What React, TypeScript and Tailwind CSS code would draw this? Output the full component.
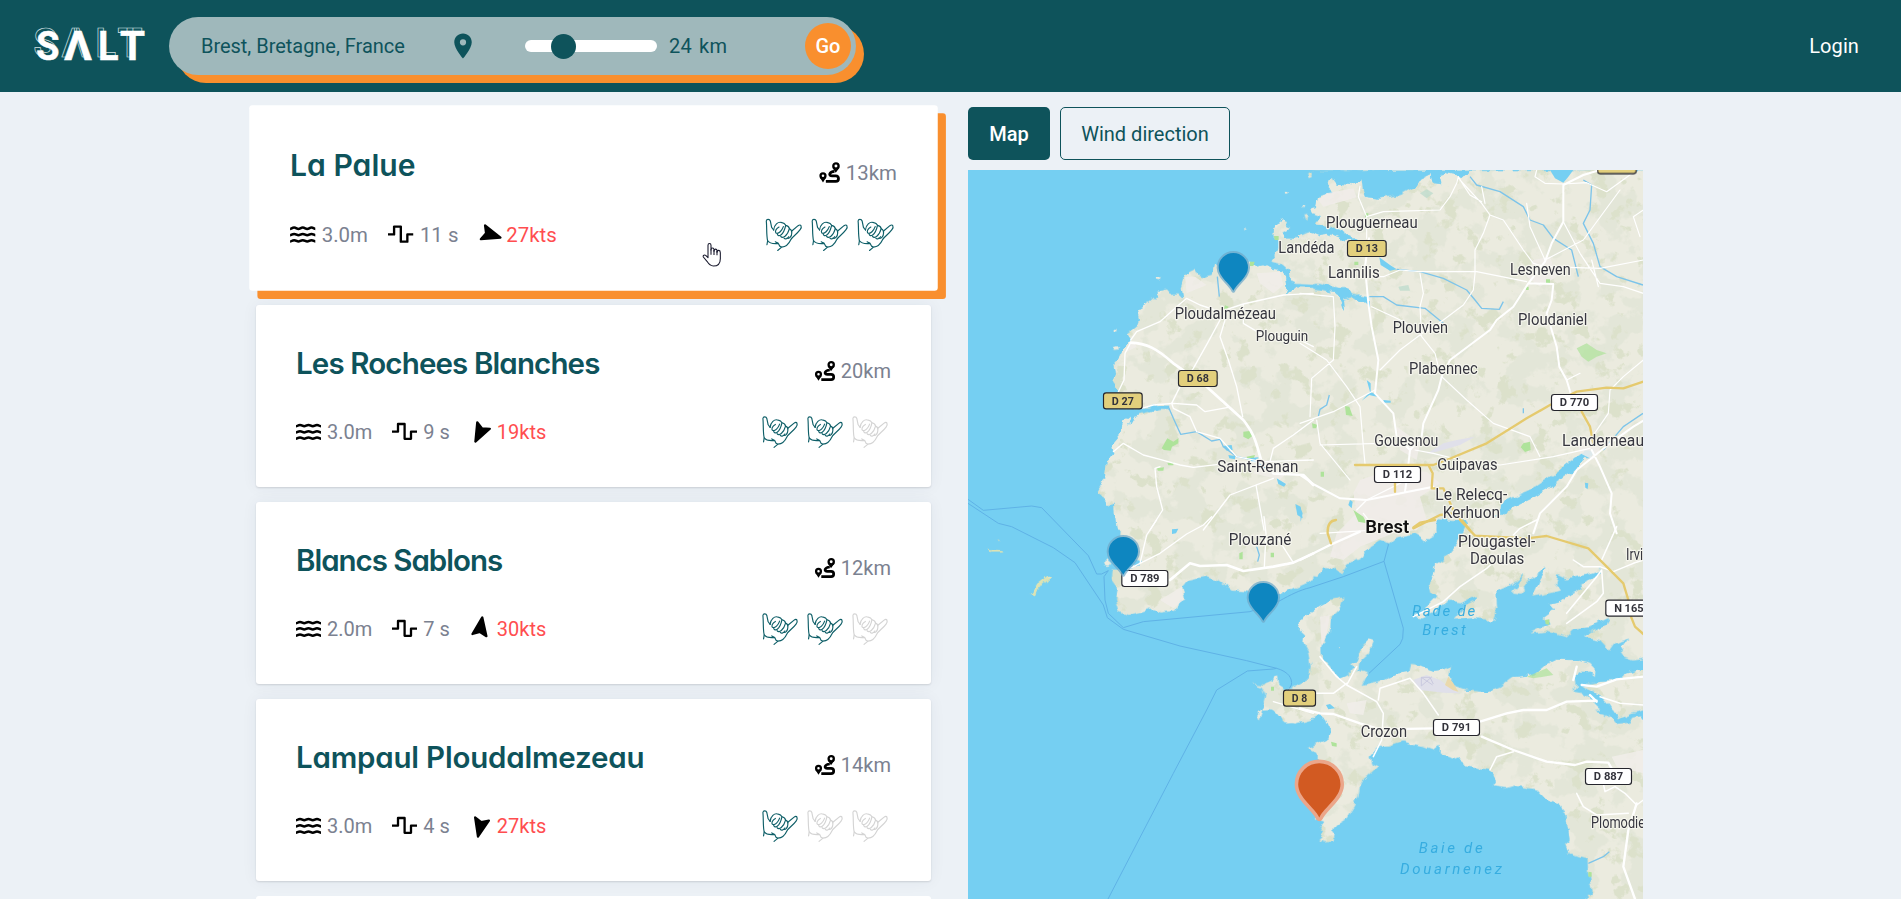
import React from "react";

type Beach = { name: string; tracking: string; km: number; wave: string; period: string; wind: string; heading: number; rating: number; active?: boolean };

const beaches: Beach[] = [
  { name: "La Palue", tracking: "tracking-[0px]", km: 13, wave: "3.0m", period: "11 s", wind: "27kts", heading: 107, rating: 3, active: true },
  { name: "Les Rochees Blanches", tracking: "tracking-[-0.87px]", km: 20, wave: "3.0m", period: "9 s", wind: "19kts", heading: 207, rating: 2 },
  { name: "Blancs Sablons", tracking: "tracking-[-1.02px]", km: 12, wave: "2.0m", period: "7 s", wind: "30kts", heading: 9, rating: 2 },
  { name: "Lampaul Ploudalmezeau", tracking: "tracking-[-0.2px]", km: 14, wave: "3.0m", period: "4 s", wind: "27kts", heading: 193, rating: 1 },
];

/* ---------- icons ---------- */

function Logo() {
  const letters: [string, number, number][] = [["S", 36, 23.5], ["Λ", 64, 28], ["L", 98, 20.5], ["T", 120, 25]];
  return (
    <svg className="h-[92px] w-[169px] shrink-0" viewBox="0 0 169 92" fontFamily="Roboto, sans-serif" fontWeight="700" fontSize="40.5">
      {letters.map(([l, x, w]) => (
        <text key={"o" + l} x={x - 2.5} y="57" textLength={w} lengthAdjust="spacingAndGlyphs" fill="none" stroke="#d5e2e3" strokeWidth="0.7">{l}</text>
      ))}
      {letters.map(([l, x, w]) => (
        <text key={l} x={x} y="59.7" textLength={w} lengthAdjust="spacingAndGlyphs" fill="#fff" stroke="#fff" strokeWidth="0.5">{l}</text>
      ))}
    </svg>
  );
}

function PlaceIcon() {
  return (
    <svg className="size-[30px] fill-[#0e535b]" viewBox="0 0 24 24">
      <path d="M12 2C8.13 2 5 5.13 5 9c0 5.25 7 13 7 13s7-7.75 7-13c0-3.87-3.13-7-7-7zm0 9.5a2.5 2.5 0 1 1 0-5 2.5 2.5 0 0 1 0 5z" />
    </svg>
  );
}

function WavesIcon() {
  const wave = "c1.3 0 2-1.3 4-1.3s2.6 1.3 4.2 1.3s2.3-1.3 4.3-1.3s2.6 1.3 4.3 1.3s2.3-1.3 4.2-1.3s2.7 1.3 4 1.3";
  return (
    <svg className="h-[19px] w-[25px]" viewBox="0 0 25 19" fill="none" stroke="#000" strokeWidth="2.5">
      <path d={`M0 4.3${wave}`} />
      <path d={`M0 10.5${wave}`} />
      <path d={`M0 16.7${wave}`} />
    </svg>
  );
}

function PeriodIcon() {
  return (
    <svg className="h-[19px] w-[25px]" viewBox="0 0 25 19" fill="none" stroke="#000" strokeWidth="2.3" strokeLinejoin="round">
      <path d="M0 9.7H6V2H12.600V16.800H19V9.700H25" />
    </svg>
  );
}

function WindIcon({ heading }: { heading: number }) {
  return (
    <svg className="mr-[2px] -ml-[2px] size-[25px] overflow-visible" viewBox="0 0 25 25" style={{ transform: `rotate(${heading}deg)` }}>
      <path d="M12.5 1.2L19.6 19.2L12.5 16L5.4 19.2Z" stroke="#000" strokeWidth="2.2" strokeLinejoin="round" />
    </svg>
  );
}

function RouteIcon() {
  return (
    <svg className="size-5 overflow-visible" viewBox="0 0 20 20" fill="none" stroke="#000">
      <circle cx="16.2" cy="3.7" r="2.6" strokeWidth="2.3" />
      <path d="M12.900 5.500L16 10.200L19.400 5.500L16.200 7Z" fill="#000" stroke="none" />
      <circle cx="3.500" cy="13.200" r="2.400" strokeWidth="2.300" />
      <path d="M.5 15L3.500 19.800L6.500 15L3.500 16.200Z" fill="#000" stroke="none" />
      <path d="M14.800 9C9.500 9.500 8.500 13.200 12.500 13.400H16C19.600 13.600 19.600 18.500 16 18.700H6.300" strokeWidth="2.700" />
    </svg>
  );
}

function ShakaIcon({ on }: { on: boolean }) {
  return (
    <svg className="size-[45px]" viewBox="14 16 137 137" fill="none" stroke={on ? "#0f5f68" : "#d4d4d4"} strokeWidth="3.5" strokeLinejoin="round" strokeLinecap="round">
      <path d="M37 116L39 104C35 90 37 60 35 45C36 38 45 39 47 45L51 64L57 72" />
      <path d="M39 104C45 113 60 113 71 112M62 107L71 112L75 120L81 123L69 133M81 123C95 122 103 112 108 101C112 92 125 86 136 71C143 61 138 53 130 59L112 74" />
      <path d="M57 72C58 57 70 45 82 50C88 51 91 54 93 58C99 59 103 63 104 68C109 70 112 74 111 81C111 91 104 99 97 96" />
      <path d="M73 63C64 68 60 76 64 81C72 85 82 73 86 62" />
      <path d="M68 84C70 94 86 90 93 58" />
      <path d="M78 91C84 99 98 90 104 68" />
      <path d="M88 96C92 101 98 98 102 92" />
    </svg>
  );
}

function HandCursor() {
  return (
    <svg className="h-[26px] w-[20px]" viewBox="187 442 60 78" fill="#fff" stroke="#17182c" strokeWidth="3.2" strokeLinejoin="round">
      <path d="M205 489V452C205 445 214 445 214 452V466C214 458 223 459 223 465V470C223 461 232 462 232 468V473C233 464 242 466 242 474V492C242 506 235 514 221 514C211 514 207 508 202 500L191 487C189 481 195 480 198 482Z" />
      <path d="M214 464V480M223 466V481M232 469V482" fill="none" />
    </svg>
  );
}

/* ---------- cards ---------- */

function BeachCard({ b }: { b: Beach }) {
  return (
    <article
      className={
        "h-[182px] w-[675px] shrink-0 rounded-[3px] bg-white px-10 pt-[35px] " +
        (b.active
          ? "z-10 -translate-y-px scale-[1.02] shadow-[8px_8px_0_#f98f2e]"
          : "shadow-[0_1px_2px_rgba(0,0,0,0.12),0_0_16px_rgba(40,50,80,0.06)]")
      }
    >
      <div className="flex h-[46px] items-start justify-between">
        <h2 className={"font-[Inter] text-[29.5px] leading-[46px] font-semibold text-[#0e535b] [font-feature-settings:'cv11'] " + b.tracking}>{b.name}</h2>
        <div className="flex items-center gap-[6px] pt-[16px] text-[20px] leading-[30px] text-[#7b8190]">
          <RouteIcon />
          <span>{b.km}km</span>
        </div>
      </div>
      <div className="mt-[18px] flex h-[55px] items-center justify-between">
        <div className="flex items-center text-[20px] leading-[30px] text-[#7b8190]">
          <WavesIcon />
          <span className="ml-[6px]">{b.wave}</span>
          <span className="ml-[20px] flex items-center gap-[6px]"><PeriodIcon />{b.period}</span>
          <span className="ml-[20px] flex items-center gap-[2px] text-[#ff4d4f]"><WindIcon heading={b.heading} />{b.wind}</span>
        </div>
        <div className="-mt-px flex">
          {[1, 2, 3].map((n) => <ShakaIcon key={n} on={n <= b.rating} />)}
        </div>
      </div>
    </article>
  );
}

/* ---------- map (drawn in units of one third of a pixel) ---------- */

const landNW = "M1060 215L1025 232L1000 235L972 236L975 215L995 203L982 198L972 182L965 176L958 188L945 195L940 228L955 245L962 262L945 285L930 305L965 312L985 330L990 365L1010 372L1060 374V384L1010 382L985 400L975 405L980 385L975 350L968 330L930 325L910 315L885 320L865 305L800 320L765 314L758 345L735 350L715 345L710 330L685 342L668 340L672 360L665 385L670 415L655 400L630 402L618 388L600 392L580 415L560 432L530 450L537 480L530 498L500 520L512 540L490 570L480 590L460 612L465 640L456 670L475 695L470 740L500 752L545 745L600 738L628 738L625 750L600 750L560 758L525 766L505 800L512 768L490 785L480 820L455 850L460 880L440 910L435 950L408 1000L440 1020L442 1040L462 1035L468 1110H1060Z";
const landNE = "M20 30H1050V1120H520L590 1080L640 1042L700 1012L760 977L820 932L872 885L878 868L858 872L820 900L770 938L700 985L620 1022L600 1035L595 1070L515 1078L460 1080L410 1078V1120H0V384L60 388L110 400L125 425L135 450L132 415L155 408L195 430L210 445L208 410L160 400L140 385L115 385L60 372L0 370V228L30 215L55 225L85 220L130 240L175 238L130 220L90 200L45 190L60 170L35 160L30 145L45 140L50 110L100 98L85 85L95 52L110 70L160 75L185 62L188 90L195 110L235 115L300 105L345 80L360 55L395 38L400 72L424 75L418 45L440 38L490 48L510 40V20Z";
const landSW = "M462 -10L466 20L478 35L475 110L530 125L545 122L540 135L500 150L455 148L452 175L470 200L465 240L475 275L500 285L545 275L575 265L600 275L650 270L660 245L676 240L668 205L690 180L735 170L780 185L815 212L860 215L910 225L960 225L1000 205L1060 180V-10Z";
const camaret = "M1060 475L1030 490L1015 510H970L968 500L955 490L952 465L942 468L937 482L910 494L877 490L905 500L917 525L908 560L890 585L899 600L908 570L930 568L955 580L972 607L1010 612L1065 596Z";
const brestCoast = "M0 195L35 165L55 168L70 145L100 145L120 160L140 130L180 118L210 78L240 60L270 70L290 52L330 45L345 40L378 64L397 52L408 20V-10H0Z";
const plougastel = "M490 -10L500 15L470 70L430 120L407 135L400 165L385 190L395 218L412 228L385 255L340 290L365 293L400 278L450 245L475 250L530 228L530 240L490 260L460 298L520 295L580 300L592 260L590 215L640 190L672 165L650 200L635 215L665 218L690 180L740 143L715 190L700 230L745 220L785 212L765 190L772 165L800 178L860 165L905 148L895 165L840 190L845 210L800 228L780 245L740 250L765 265L730 290L748 312L690 340L740 335L800 352L822 330L870 322L930 292L920 310L850 350L900 360L930 392L945 370L995 355L955 380L975 410L1000 418L1050 412V-10Z";
const crozon = "M130 232L95 238L55 260L20 282L0 305L-5 325L15 345L12 370L28 400L35 440L30 475L-20 500L-40 612L30 598L60 585L80 600L92 630L88 655L60 668L25 688L50 700L48 900L75 905L60 925L70 940L55 958L70 964L105 962L108 940L100 930L108 915L140 895L165 855L175 830L180 800L190 780L220 755L235 740L215 730L210 710L235 682L265 680L310 664L345 675L370 678L400 690L418 675L418 702L430 705L465 715L500 738L570 750L590 780L580 800L620 805L650 798L710 810L740 842L778 850L800 900L808 960L795 970L805 1000L862 1015L865 1060L875 1120L850 1137V1150H1050V625L1020 585L1000 590L985 612L950 615L935 598L915 580L880 575L905 570L880 545L850 520L820 515L830 500L825 470L840 455L865 455L882 470L885 445L870 430L830 420L770 418L735 435L700 465L640 470L600 500L560 515L500 512L465 500L445 470L450 438L430 448L405 452L370 440L330 435L325 455L290 460L235 485L185 495L202 462L175 450L178 425L210 395L222 365L205 360L185 380L165 425L150 430L162 445L145 465L120 475L90 440L65 410L65 375L90 340L95 290L120 265Z";
const landevennec = "M845 495L868 508L900 528L930 560L955 598L1000 578L1050 568V452H1010L975 460L940 482L900 485Z";

function Roads({ d, w = 5, c = "#ffffff" }: { d: string; w?: number; c?: string }) {
  return <path d={d} fill="none" stroke={c} strokeWidth={w} strokeLinejoin="round" strokeLinecap="round" />;
}

function Place({ x, y, w, children, size = 48, bold = false }: { x: number; y: number; w: number; children: string; size?: number; bold?: boolean }) {
  return (
    <text x={x} y={y} textLength={w} lengthAdjust="spacingAndGlyphs" fontSize={size} fontWeight={bold ? 600 : 400} fill={bold ? "#111" : "#36363f"} stroke="#f6f6ee" strokeWidth="7" strokeLinejoin="round" paintOrder="stroke">{children}</text>
  );
}

function Sea({ x, y, w, children }: { x: number; y: number; w: number; children: string }) {
  return <text x={x} y={y} textLength={w} fontSize="45" fontStyle="italic" fill="#37ade0">{children}</text>;
}

function Badge({ x, y, w = 116, yellow = false, children }: { x: number; y: number; w?: number; yellow?: boolean; children?: string }) {
  return (
    <g transform={`translate(${x} ${y})`}>
      <rect x="1.5" y="1.5" width={w} height="48" rx="8" fill={yellow ? "#e2cf7c" : "#fff"} stroke="#25252d" strokeWidth="3.5" />
      {children && <text x={w / 2 + 1.5} y="37" textAnchor="middle" textLength={w - 50} lengthAdjust="spacingAndGlyphs" fontSize="34" fontWeight="700" fill="#33333b">{children}</text>}
    </g>
  );
}

function Pin({ x, y, big = false }: { x: number; y: number; big?: boolean }) {
  const s = big ? 1.44 : 1;
  return (
    <g transform={`translate(${x} ${y}) scale(${s})`}>
      <path d="M0 69C-10 48 -44 28 -44 0A44 44 0 0 1 44 0C44 28 10 48 0 69Z" fill={big ? "#d25a22" : "#0e86c0"} stroke={big ? "#eba68a" : "#6fa9c9"} strokeOpacity={big ? 1 : 0.75} strokeWidth={big ? 15 : 12} strokeLinejoin="round" paintOrder="stroke" />
    </g>
  );
}

function CoastMap() {
  return (
    <svg className="h-[729px] w-[675px] bg-[#75cff2]" viewBox="24 30 2025 2187" fontFamily="Roboto, 'Noto Sans', sans-serif">
      <defs>
        <filter id="coast" x="0" y="0" width="2080" height="2240" filterUnits="userSpaceOnUse" colorInterpolationFilters="sRGB">
          <feTurbulence type="fractalNoise" baseFrequency="0.035" numOctaves="2" seed="4" result="n" />
          <feDisplacementMap in="SourceGraphic" in2="n" scale="22" xChannelSelector="R" yChannelSelector="G" result="land" />
          <feTurbulence type="fractalNoise" baseFrequency="0.011" numOctaves="5" seed="11" result="t" />
          <feColorMatrix in="t" type="matrix" values="0 0 0 0 0.890  0 0 0 0 0.902  0 0 0 0 0.847  14 0 0 0 -7" result="green" />
          <feTurbulence type="fractalNoise" baseFrequency="0.018" numOctaves="5" seed="31" result="t2" />
          <feColorMatrix in="t2" type="matrix" values="0 0 0 0 0.862  0 0 0 0 0.882  0 0 0 0 0.796  0 12 0 0 -7.3" result="dark" />
          <feMerge result="all">
            <feMergeNode in="land" />
            <feMergeNode in="green" />
            <feMergeNode in="dark" />
          </feMerge>
          <feComposite in="all" in2="land" operator="in" />
        </filter>
      </defs>

      <g fill="none" stroke="#5fb2e6" strokeWidth="3">
        <path d="M24 1018L70 1051L215 1038L245 1043L310 1110L385 1187L410 1242H425L445 1232L432 1250L435 1320L445 1360L490 1403L550 1385L870 1355L960 1322C990 1305 1020 1290 1050 1283L1150 1250L1272 1204L1285 1155L1282 1140" />
        <path d="M24 1030L115 1090L155 1100L280 1163L345 1208L430 1335L442 1373L490 1408L660 1458L860 1502L950 1525C985 1535 998 1555 994 1575L985 1590" />
        <path d="M950 1525L940 1527L862 1533L770 1590L740 1650L640 1840L444 2217M1272 1204L1330 1405L1328 1435L1320 1453L1227 1540" />
      </g>

      <g filter="url(#coast)" fill="#ebebdf">
        <path d={landNW} />
        <path d={landNE} transform="translate(1020 0)" />
        <g transform="translate(0 1080)"><path d={landSW} /><path d={camaret} /></g>
        <g transform="translate(1020 1080)">
          <path d={brestCoast} /><path d={plougastel} /><path d={crozon} /><path d={landevennec} />
        </g>
        <path d="M432 1205L440 1196L455 1210L445 1222L432 1218ZM1038 40L1055 35V48L1044 52ZM1030 165L1045 170L1042 188L1034 180ZM1024 135L1034 132L1030 148ZM968 98H980V108H968ZM855 200L864 208L855 212ZM590 352L606 350L602 362L590 360ZM460 508H470V518H460ZM462 560L475 556L472 570H460ZM1132 1465L1140 1460L1138 1470Z" />
        <path d="M210 1305L232 1270L262 1246L272 1252L246 1275L220 1310ZM80 1165L105 1168L130 1170V1176H90ZM108 1132L118 1140V1148Z" fill="#dde3b4" />
      </g>

      <g fill="#f1edea" opacity="0.85">
        <path d="M1100 100L1180 85L1190 112L1090 140L1075 120ZM890 340L960 335L970 375L940 400L900 370ZM675 350L705 350L740 375L680 400ZM500 560L520 545L530 560L500 575Z" />
        <path d="M1200 960L1290 930L1400 935L1440 970L1380 1010L1400 1080L1370 1110L1300 1120L1200 1160L1150 1200L1110 1190L1130 1120L1190 1060L1180 1000ZM1310 800L1380 850L1370 900L1320 870ZM900 900L1000 915L960 960L880 940ZM600 1320L665 1280L670 1320L640 1345Z" />
        <path d="M1720 300L1770 290L1790 350L1740 380L1700 350ZM1850 830L1930 850L1900 900L1860 880ZM1080 1370L1110 1365L1100 1420L1085 1460ZM1160 1630L1220 1620L1210 1665L1170 1660ZM1955 1790L2049 1770V1840L1970 1820Z" />
      </g>
      <g fill="#e0e0ea">
        <path d="M1400 882L1450 850L1490 840L1545 830L1500 855L1430 875ZM1360 1560L1400 1545L1440 1560L1480 1590L1500 1600L1450 1598L1380 1590Z" />
      </g>
      <path d="M1384 1552L1418 1575M1384 1578L1416 1550M1384 1552V1578M1384 1552H1410L1420 1572" fill="none" stroke="#c9c9de" strokeWidth="3" />
      <path d="M1465 1550L1480 1570L1495 1595L1478 1590L1455 1575Z" fill="#ead9ac" />
      <g fill="#aee39a">
        <path d="M605 865L622 835L640 845L655 835L655 850L636 860L632 872L612 870ZM850 815L875 812L880 825L865 838L850 830ZM590 925L612 922L610 932H594ZM622 908L640 906V916H625ZM860 890L885 885L880 900H862ZM870 305L884 305L880 318H870ZM942 228H956V240H944ZM795 436L806 440L800 450L792 446Z" />
        <path d="M1215 160H1225V172H1215ZM1183 305H1195V315H1183ZM1155 738L1168 740L1178 768L1158 765ZM1056 790L1072 794L1068 805H1058ZM1082 935H1092V950H1082ZM1698 380H1706V390H1698ZM1758 358H1770V372H1758ZM1690 850L1710 845L1712 870L1695 876L1682 862ZM1180 1050L1210 1070L1220 1090L1195 1085ZM1113 1745L1130 1750V1760L1116 1758ZM1755 1380L1768 1378V1395L1757 1392ZM1885 2135L1895 2137V2150H1885ZM838 1180L848 1175V1198H838ZM932 1178H942V1192H932ZM933 1580H942V1592H933Z" />
        <path d="M1850 565L1880 550L1910 570L1940 580L1910 590L1885 605L1865 590ZM1700 1550L1760 1525L1780 1545L1720 1555Z" opacity="0.7" />
      </g>
      <g fill="#bfdccd"><path d="M1380 100L1400 88L1420 100L1400 115ZM1315 380L1345 375L1350 392L1320 392Z" opacity="0.8" /></g>

      <g fill="#75cff2">
        <path d="M1770 30H1840L1825 50L1810 68L1785 55ZM788 858L815 855L818 870L800 872ZM805 885L825 888V898L808 895ZM865 895L895 892L895 905L875 905ZM950 955L978 972L972 980L955 972ZM1006 1032L1022 1040L1028 1075L1012 1065ZM636 1108L655 1106L648 1120L636 1122ZM1020 1040L1028 1060L1022 1085ZM1270 720L1292 722V728H1272ZM1170 1020L1178 1025L1175 1045L1165 1035ZM1875 968L1885 970L1883 987L1876 983ZM1098 1635L1110 1632L1125 1645L1105 1648Z" />
        <path d="M1205 722L1230 695L1220 660L1232 670L1232 695L1260 712L1240 708L1228 705ZM1258 292L1290 315L1310 328L1290 332L1262 315Z" />
      </g>
      <g fill="none" stroke="#7cc4ea" strokeWidth="4" strokeLinejoin="round">
        <path d="M625 740L640 775L662 823L710 815L755 843L780 838L790 860L830 890L880 900L940 940M772 350L778 410" />
        <path d="M1310 328L1380 335L1450 355L1520 390L1545 420L1565 445L1618 448L1630 425M1228 410H1270L1310 435L1395 445L1450 490M1530 50L1550 75L1620 95L1690 140L1710 180L1750 195L1780 235L1835 270L1845 310L1855 350" />
        <path d="M1870 60L1895 75L1890 150L1870 190L1900 250L1920 320L1970 350L2049 375M2049 760L1990 800L1930 870M1108 705L1100 735L1080 748L1075 770M890 1160L898 1185L893 1205M1885 2110L1930 2090L1948 2075M1690 745V760" />
      </g>

      <g>
        <Roads d="M512 548C560 550 590 565 640 610L740 680L850 780C890 830 890 860 905 905L940 940L1030 945L1060 975" w={8} />
        <Roads d="M512 540L530 515L600 485L650 440L680 415L720 435L780 455L850 432L970 405L1060 400M475 695L492 660L495 580L512 548M780 480L745 545L700 625L660 680L635 730L640 745L690 770L710 815L780 835L830 890L905 905M795 480L780 530L805 600L830 680L848 770M545 745L580 735L640 730L710 735L735 755L805 742M460 875L490 850L550 885L600 898L660 915L700 922L820 908L1060 900M600 920L585 925L590 980L608 1050L570 1110M730 1110L810 1005L940 955M888 975L912 1110M1060 780L1000 825L940 865L930 905M850 432L850 490L900 520L1020 540L1060 560" w={4} />
      </g>
      <g transform="translate(1020 0)">
        <Roads d="M207 235L195 320L205 430L215 500L235 600L225 700L280 760L290 830L330 870L320 960L315 995M425 650L415 690L370 790L365 830L330 870M425 650L450 600L530 540L570 510L590 480L640 440L685 370L735 305L755 250L790 185V75L850 45L900 30M685 370L760 372L755 420L740 460L770 560L778 620L800 660L815 710M0 945L45 975L120 1015L200 1020L400 980M875 870L900 920L935 1000L930 1060L950 1120M1050 770L1000 800L930 850L880 890L830 930L800 980L720 1060L700 1120" w={6} />
        <Roads d="M180 78L175 110L200 170V235M200 170L250 155L420 150L450 110L470 70L475 50L490 75L510 105L545 125M480 60L545 130L570 165L550 220L525 270L525 340L520 390L490 435L430 480L380 515M570 165L610 180L670 270L700 310L735 320M545 80L555 130M710 30L705 50L735 70L790 72L860 68L920 95L1010 30M680 130L690 200L735 300L850 240L960 90M790 185L840 280L900 370L970 380L1030 400M200 350H250L300 330L360 335L530 335L680 365M360 340L370 400L360 440L365 530L405 580L420 640M0 400L100 410L105 500L100 600L35 655L30 770M215 440L290 475L320 490M0 550L80 600L140 680L180 740L190 860L195 910M380 510L300 570L240 630M425 650L500 720L580 790L690 830L720 890M0 790L100 755L225 690M50 780L60 850L150 960M60 855L240 850L330 860M345 870L400 880L480 900L600 915L760 890L870 865M800 660L840 640M1030 600L970 650L930 690L925 760L870 840M1030 150L1000 170L1020 230M735 320L900 325L1030 300M875 300L895 380M320 960L200 1020L170 1050M190 1060L230 1110L60 1120" w={3.5} />
        <Roads d="M165 915H400L440 900L560 850L680 775L750 735L830 695L920 683L970 685L1030 665M845 755L870 800L880 850M385 915L398 940L395 985L430 985L460 1050L510 1110M285 970V995M340 1105L420 1065L460 1060" w={7} c="#e5ca6e" />
      </g>
      <g transform="translate(0 1080)">
        <Roads d="M630 180L690 130L720 138L800 135L850 153L940 140L1000 128L1060 100" w={8} />
        <Roads d="M540 130L600 100L680 42L730 15L755 -10M590 0L560 45L540 130L500 150M912 -10L918 40L913 140M950 50L1000 128M940 545L1060 580" w={4} />
      </g>
      <g transform="translate(1020 1080)">
        <Roads d="M0 120L90 75L180 35M0 565L60 580L100 582L180 610L240 628L400 625M540 605L620 580L670 570L740 570L800 545L890 542M545 650L640 690L740 725L825 735L860 725L925 728L960 790M1010 850L985 930L970 1040L1005 1137M830 440L820 480M870 525L890 545M845 495L890 500L950 478L1030 470" w={7} />
        <Roads d="M60 410L110 470L140 495L230 545L250 580L245 660L220 710M140 495L170 440M0 520H100L140 490M235 540L240 505L330 475L370 520L415 585M570 750L590 710L640 695M480 200L560 145L600 110M340 290L430 245L480 200M905 150L910 220L890 245L800 310M905 150L890 170L800 280M905 120L950 20M640 45L660 25L710 0M900 530L960 550L1030 555M830 820L850 860L890 885L985 880M910 790L915 815L945 800L975 820L1010 855L1030 840M820 120L850 140H900L940 155L1000 130L1030 120" w={4.500} />
        <Roads d="M108 0C85 2 82 20 83 40L93 70M340 22L360 8L405 0M480 0L525 47L680 55L740 48L865 85L920 140L970 190L985 240M985 270L1005 320L1030 342" w={7} c="#e5ca6e" />
      </g>

      <Place x={1098} y={203} w={275}>Plouguerneau</Place>
      <Place x={955} y={280} w={168}>Landéda</Place>
      <Place x={1104} y={354} w={155}>Lannilis</Place>
      <Place x={644} y={477} w={304}>Ploudalmézeau</Place>
      <Place x={887} y={543} w={158} size={44}>Plouguin</Place>
      <Place x={1298} y={519} w={166}>Plouvien</Place>
      <Place x={1347} y={643} w={206}>Plabennec</Place>
      <Place x={1650} y={346} w={182}>Lesneven</Place>
      <Place x={1674} y={494} w={208}>Ploudaniel</Place>
      <Place x={1243} y={858} w={192}>Gouesnou</Place>
      <Place x={1432} y={931} w={181}>Guipavas</Place>
      <Place x={1806} y={859} w={246}>Landerneau</Place>
      <Place x={772} y={937} w={243}>Saint-Renan</Place>
      <Place x={1426} y={1020} w={216}>Le Relecq-</Place>
      <Place x={1448} y={1073} w={172}>Kerhuon</Place>
      <Place x={1216} y={1119} w={132} size={54} bold>Brest</Place>
      <Place x={806} y={1155} w={188}>Plouzané</Place>
      <Place x={1494} y={1161} w={232}>Plougastel-</Place>
      <Place x={1530} y={1213} w={163}>Daoulas</Place>
      <Place x={1998} y={1199} w={110}>Irvillac</Place>
      <Place x={1202} y={1730} w={139}>Crozon</Place>
      <Place x={1893} y={2005} w={196}>Plomodiern</Place>
      <Sea x={1356} y={1367} w={190}>Rade de</Sea>
      <Sea x={1387} y={1425} w={130}>Brest</Sea>
      <Sea x={1376} y={2079} w={192}>Baie de</Sea>
      <Sea x={1320} y={2142} w={306}>Douarnenez</Sea>

      <Badge x={1161} y={240} yellow>D 13</Badge>
      <Badge x={1911} y={-9} yellow />
      <Badge x={654} y={630} yellow>D 68</Badge>
      <Badge x={429} y={697} yellow>D 27</Badge>
      <Badge x={1773} y={702} w={138}>D 770</Badge>
      <Badge x={1242} y={918} w={138}>D 112</Badge>
      <Badge x={484} y={1230} w={138}>D 789</Badge>
      <Badge x={1936} y={1319} w={138}>N 165</Badge>
      <Badge x={969} y={1589} w={96} yellow>D 8</Badge>
      <Badge x={1419} y={1677} w={138}>D 791</Badge>
      <Badge x={1875} y={1824} w={138}>D 887</Badge>

      <Pin x={820} y={323} />
      <Pin x={490} y={1175} />
      <Pin x={910} y={1313} />
      <Pin x={1078} y={1873} big />
    </svg>
  );
}

/* ---------- page ---------- */

export default function App() {
  return (
    <div className="flex h-screen flex-col overflow-hidden bg-[#ecf1f6] font-[Roboto,sans-serif]">
      <header className="flex h-[92px] shrink-0 items-center bg-[#0e535b]">
        <Logo />
        <form className="flex h-[58px] w-[687px] items-center rounded-full bg-[#9fb8bb] pr-[5px] pl-[32px] text-[20px] text-[#0e535b] shadow-[8px_8px_0_#f98f2e]">
          <span className="w-[247px] tracking-[-0.03px]">Brest, Bretagne, France</span>
          <PlaceIcon />
          <div className="ml-[47px] flex h-3 w-[132px] items-center rounded-full bg-white pl-[26px]">
            <div className="size-[25px] rounded-full bg-[#0e535b]" />
          </div>
          <span className="ml-[12px] tracking-[0.2px] [word-spacing:2px]">24 km</span>
          <button type="button" className="ml-auto size-[46px] rounded-full bg-[#f98f2e] text-[20px] font-medium text-white">Go</button>
        </form>
        <a className="mr-[42px] ml-auto text-[20px] tracking-[0.1px] text-white">Login</a>
      </header>
      <main className="flex min-h-0 flex-1 pl-[256px]">
        <section className="relative flex w-[675px] flex-col gap-[15px] pt-[16px]">
          {beaches.map((b) => <BeachCard key={b.name} b={b} />)}
          <article className="h-[182px] w-[675px] shrink-0 rounded-[3px] bg-white" />
          <div className="absolute top-[150px] left-[446px] z-20"><HandCursor /></div>
        </section>
        <section className="ml-[37px] flex w-[675px] flex-col pt-[15px]">
          <nav className="flex gap-[10px] text-[20px]">
            <button className="h-[53px] w-[82px] rounded-[5px] bg-[#0e535b] font-medium text-white">Map</button>
            <button className="h-[53px] w-[170px] rounded-[5px] border border-[#0e535b] text-[#0e535b]">Wind direction</button>
          </nav>
          <div className="mt-[10px] shrink-0"><CoastMap /></div>
        </section>
      </main>
    </div>
  );
}
